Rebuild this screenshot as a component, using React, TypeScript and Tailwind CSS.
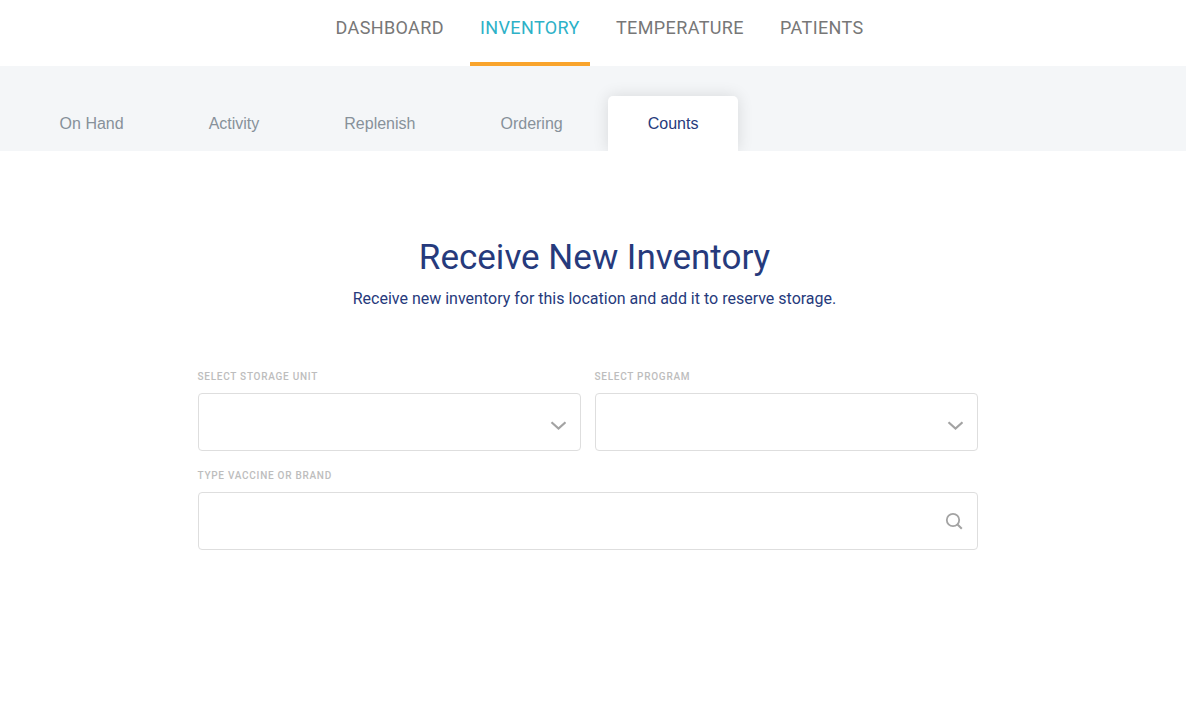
import React from "react";
import clsx from "clsx";

const navItems = [
  { label: "DASHBOARD", width: "w-[128.5px]" },
  { label: "INVENTORY", width: "w-[120px]", active: true },
  { label: "TEMPERATURE", width: "w-[148px]" },
  { label: "PATIENTS", width: "w-[104px]" },
];

const tabs = [
  { label: "On Hand" },
  { label: "Activity" },
  { label: "Replenish" },
  { label: "Ordering" },
  { label: "Counts", active: true },
];

export default function App() {
  return (
    <div className="min-h-screen w-full bg-white font-['Roboto',sans-serif]">
      <MainNav />
      <SubNav />
      <ReceiveInventory />
    </div>
  );
}

/* -------- Top navigation -------- */
function MainNav() {
  return (
    <nav className="flex h-[66px] gap-4 pl-[325.5px]">
      {navItems.map((item) => (
        <a
          key={item.label}
          className={clsx(
            "h-full border-b-4 px-2.5 pt-3.5 text-[18px] leading-7 tracking-[0.38px] whitespace-nowrap",
            item.width,
            item.active
              ? "border-[#f9a42c] text-[#2db1c7]"
              : "border-transparent text-[#777777]"
          )}
        >
          {item.label}
        </a>
      ))}
    </nav>
  );
}

/* -------- Inventory tabs -------- */
function SubNav() {
  return (
    <div className="flex h-[85px] items-end gap-[5px] overflow-hidden bg-[#f4f6f8] pl-[19.6px] font-['Liberation_Sans',Arial,sans-serif]">
      {tabs.map((tab) => (
        <a
          key={tab.label}
          className={clsx(
            "h-[55px] px-10 text-base leading-[55px] whitespace-nowrap",
            tab.active
              ? "w-[130px] rounded-t-[5px] bg-white text-[#263a7c] shadow-[0_0_16px_rgba(0,0,0,0.12)]"
              : "text-[#87919a]"
          )}
        >
          {tab.label}
        </a>
      ))}
    </div>
  );
}

/* -------- Receive form -------- */
function ReceiveInventory() {
  return (
    <main className="pt-[83px]">
      <header className="pl-[3px] text-center text-[#263a7c]">
        <h1 className="text-[35px] leading-12">Receive New Inventory</h1>
        <p className="mt-[5px] text-base leading-6">
          Receive new inventory for this location and add it to reserve storage.
        </p>
      </header>

      <form className="mt-[58px] ml-[198px] grid w-[780px] grid-cols-2 gap-x-3.5 gap-y-[17px]">
        <Field label="SELECT STORAGE UNIT">
          <ChevronIcon />
        </Field>
        <Field label="SELECT PROGRAM">
          <ChevronIcon />
        </Field>
        <Field label="TYPE VACCINE OR BRAND" className="col-span-2">
          <SearchIcon />
        </Field>
      </form>
    </main>
  );
}

function Field({
  label,
  className,
  children,
}: {
  label: string;
  className?: string;
  children: React.ReactNode;
}) {
  return (
    <div className={className}>
      <div className="-ml-[0.5px] h-6 text-[10px] leading-4 font-medium tracking-[0.73px] text-[#bdbdbd]">
        {label}
      </div>
      <div className="flex h-[58px] items-center justify-end rounded-[4px] border border-[#dedede] bg-white pr-3.5">
        {children}
      </div>
    </div>
  );
}

function ChevronIcon() {
  return (
    <svg className="mt-[7px] h-2.5 w-4" viewBox="0 0 16 10" fill="none">
      <path d="M1.5 1.2 8.5 7.5l7-6.3" stroke="#a3a3a3" strokeWidth="2.2" />
    </svg>
  );
}

function SearchIcon() {
  return (
    <svg className="h-[18px] w-[18px]" viewBox="0 0 18 18" fill="none">
      <circle cx="8" cy="8" r="6.2" stroke="#a3a3a3" strokeWidth="1.8" />
      <path d="m12 12 4.8 4.8" stroke="#a3a3a3" strokeWidth="2" />
    </svg>
  );
}
